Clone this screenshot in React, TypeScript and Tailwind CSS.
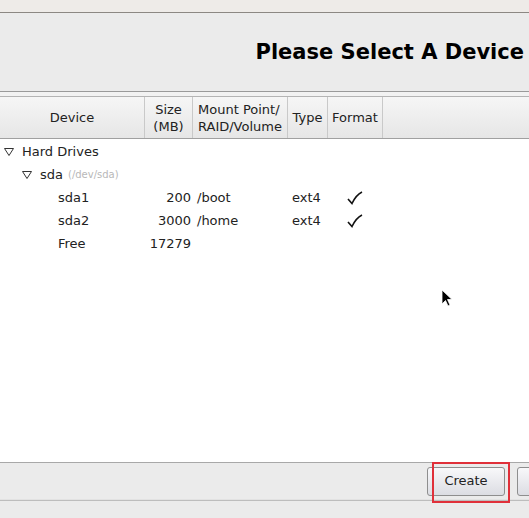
import React from "react";

function Tri({ className }: { className: string }) {
  return (
    <svg className={className} width="10" height="8" viewBox="0 0 10 8">
      <path d="M0.5 0.5 L9.5 0.5 L5 7.5 Z" fill="none" stroke="#333" strokeWidth="1" />
    </svg>
  );
}

function Check() {
  return (
    <svg width="16" height="14" viewBox="0 0 16 14">
      <path d="M1 8 L5 12.5 Q9 4 15 1" fill="none" stroke="#111" strokeWidth="1.6" />
    </svg>
  );
}

const rows = [
  { name: "sda1", size: "200", mount: "/boot", type: "ext4", fmt: true },
  { name: "sda2", size: "3000", mount: "/home", type: "ext4", fmt: true },
  { name: "Free", size: "17279", mount: "", type: "", fmt: false },
];

export default function App() {
  return (
    <div
      className="relative w-[529px] h-[518px] overflow-hidden bg-[#ebebeb] text-[13px] text-[#222] flex flex-col"
      style={{ fontFamily: '"DejaVu Sans", sans-serif' }}
    >
      <div className="h-[12px] bg-[#eeebe8] border-b border-[#8c8883] box-content" />
      <div className="h-[79px] flex items-center justify-end pr-[5px] pt-[2px] bg-[#ebebeb] border-b border-[#9a9a9a]">
        <h1 className="text-[21px] font-bold text-black whitespace-nowrap">Please Select A Device</h1>
      </div>
      <div className="h-[4px] bg-[#f2f2f2]" />
      <div className="flex-1 flex flex-col bg-white border-t border-[#b4b4b4]">
        <div className="flex h-[42px] border-b border-[#a0a0a0] bg-gradient-to-b from-[#f6f6f6] to-[#e6e6e6] leading-[17px] text-[#222]">
          <div className="w-[145px] flex items-center justify-center border-r border-[#c9c9c9]">Device</div>
          <div className="w-[48px] flex flex-col items-center justify-center border-r border-[#c9c9c9]">
            <span>Size</span>
            <span>(MB)</span>
          </div>
          <div className="w-[95px] flex flex-col items-start justify-center pl-[5px] border-r border-[#c9c9c9]">
            <span>Mount Point/</span>
            <span>RAID/Volume</span>
          </div>
          <div className="w-[40px] flex items-center justify-center border-r border-[#c9c9c9]">Type</div>
          <div className="w-[55px] flex items-center justify-center border-r border-[#c9c9c9]">Format</div>
        </div>
        <div className="flex-1 pt-[1px]">
          <div className="h-[23px] flex items-center">
            <Tri className="ml-[4px] mr-[8px]" />
            <span>Hard Drives</span>
          </div>
          <div className="h-[23px] flex items-center">
            <Tri className="ml-[22px] mr-[8px]" />
            <span>sda</span>
            <span className="ml-[5px] text-[10px] text-[#b8b8b8]">(/dev/sda)</span>
          </div>
          {rows.map((r) => (
            <div key={r.name} className="h-[23px] flex items-center">
              <span className="w-[145px] pl-[58px]">{r.name}</span>
              <span className="w-[46px] text-right">{r.size}</span>
              <span className="w-[97px] pl-[6px]">{r.mount}</span>
              <span className="w-[59px] pl-[4px]">{r.type}</span>
              <span className="w-[20px] flex justify-start">{r.fmt && <Check />}</span>
            </div>
          ))}
        </div>
        <div className="h-[38px] bg-[#ebebeb] border-t border-[#a8a8a8] border-b border-b-[#e2e2e2] flex items-center justify-end">
          <div className="relative mr-[24px]">
            <button className="w-[78px] h-[29px] rounded-[3px] border border-[#8e8e8e] bg-gradient-to-b from-[#f8f8fa] to-[#dcdde3] text-[13px] text-[#222]">
              Create
            </button>
            <div className="absolute left-[5px] -top-[5px] w-[78px] h-[41px] border-2 border-[#e0303a]" />
          </div>
          <div className="absolute right-[-20px] w-[32px] h-[29px] rounded-[3px] border border-[#8e8e8e] bg-gradient-to-b from-[#f8f8fa] to-[#dcdde3]" />
        </div>
        <div className="h-[18px] bg-[#ebebeb] border-t border-[#bdbdbd]" />
      </div>
      <svg className="absolute left-[441px] top-[289px]" width="12" height="19" viewBox="0 0 12 19">
        <path d="M1 1 L1 15 L4.5 11.5 L7 17 L9 16 L6.5 10.5 L11 10.5 Z" fill="#000" stroke="#fff" strokeWidth="0.8" />
      </svg>
    </div>
  );
}
